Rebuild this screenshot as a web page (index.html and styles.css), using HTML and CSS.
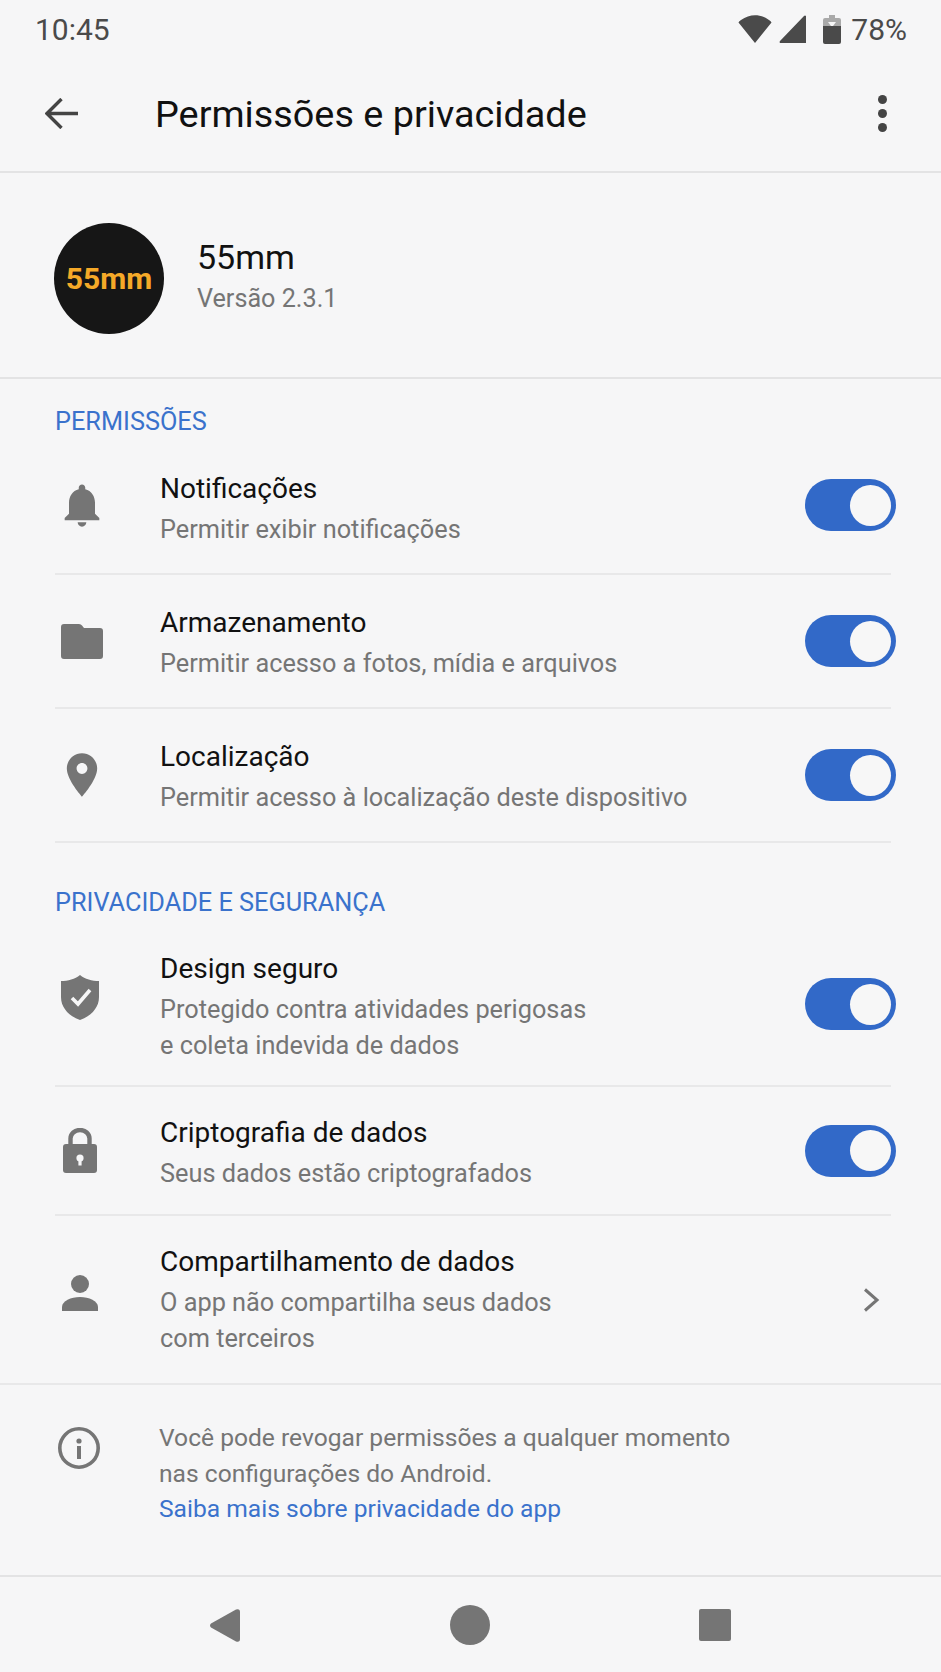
FILE: index.html
```html
<!DOCTYPE html>
<html lang="pt-BR">
<head>
  <meta charset="UTF-8">
  <meta name="viewport" content="width=device-width, initial-scale=1.0">
  <title>Permissões e privacidade</title>
  <link rel="stylesheet" href="styles.css">
</head>
<body>
  <!-- Status bar -->
  <div class="statusbar">
    <span class="status-time">10:45</span>
    <div class="status-right">
      <svg class="ic-wifi" width="34" height="28" viewBox="0 0 34 28"><path d="M17 28 L0.5 7.5 Q1 6 3 5 C12 -1.5 22 -1.5 31 5 Q33 6 33.5 7.5 Z"/></svg>
      <svg class="ic-cell" width="27" height="28" viewBox="0 0 27 28"><path d="M27 1 V28 H1 Q0 27 1 26 L25 1 Q26 0 27 1 Z"/></svg>
      <svg class="ic-batt" width="18" height="29" viewBox="0 0 18 29"><path class="batt-low" d="M6 0 H12 V3 H16 Q18 3 18 5 V11 H0 V5 Q0 3 2 3 H6 Z"/><path d="M0 11 H18 V27 Q18 29 16 29 H2 Q0 29 0 27 Z"/><path class="batt-bolt" d="M5 7 H13 L10 11 H8 Z"/></svg>
      <span class="status-pct">78%</span>
    </div>
  </div>

  <!-- Toolbar -->
  <div class="toolbar">
    <svg class="back" width="33" height="31" viewBox="0 0 33 31"><path d="M33 15.5 H3 M16.5 1 L2 15.5 L16.5 30" fill="none" stroke="#444" stroke-width="3.4"/></svg>
    <h1>Permissões e privacidade</h1>
    <div class="more"><i></i><i></i><i></i></div>
  </div>

  <!-- App -->
  <div class="app-head">
    <div class="app-logo">55mm</div>
    <div class="app-text">
      <div class="app-name">55mm</div>
      <div class="app-version">Versão 2.3.1</div>
    </div>
  </div>

  <!-- Permissions -->
  <div class="section-label">PERMISSÕES</div>
  <div class="list">
    <div class="row row-first">
      <div class="row-icon">
        <svg width="52" height="52" viewBox="0 0 24 24"><path d="M12 22c1.1 0 2-.9 2-2h-4c0 1.1.9 2 2 2zm6-6v-5c0-3.07-1.63-5.64-4.5-6.32V4c0-.83-.67-1.5-1.5-1.5s-1.5.67-1.5 1.5v.68C7.64 5.36 6 7.92 6 11v5l-2 2v1h16v-1l-2-2z"/></svg>
      </div>
      <div class="row-text">
        <div class="row-title">Notificações</div>
        <div class="row-sub">Permitir exibir notificações</div>
      </div>
      <div class="toggle"><span></span></div>
    </div>
    <div class="row">
      <div class="row-icon">
        <svg width="42" height="35" viewBox="0 0 42 35"><path d="M3 0 H18 Q20 0 21 1.5 L23 4 H39 Q42 4 42 7 V32 Q42 35 39 35 H3 Q0 35 0 32 V3 Q0 0 3 0 Z"/></svg>
      </div>
      <div class="row-text">
        <div class="row-title">Armazenamento</div>
        <div class="row-sub">Permitir acesso a fotos, mídia e arquivos</div>
      </div>
      <div class="toggle"><span></span></div>
    </div>
    <div class="row">
      <div class="row-icon">
        <svg width="52" height="52" viewBox="0 0 24 24"><path d="M12 2C8.13 2 5 5.13 5 9c0 5.25 7 13 7 13s7-7.75 7-13c0-3.87-3.13-7-7-7zm0 9.5c-1.38 0-2.5-1.12-2.5-2.5s1.12-2.5 2.5-2.5 2.5 1.12 2.5 2.5-1.12 2.5-2.5 2.5z"/></svg>
      </div>
      <div class="row-text">
        <div class="row-title">Localização</div>
        <div class="row-sub">Permitir acesso à localização deste dispositivo</div>
      </div>
      <div class="toggle"><span></span></div>
    </div>
  </div>

  <!-- Privacy -->
  <div class="section-label section-label-2">PRIVACIDADE E SEGURANÇA</div>
  <div class="list list-2">
    <div class="row row-design">
      <div class="row-icon icon-up">
        <svg width="38" height="45" viewBox="0 0 38 45"><path d="M19 0 C24 4 31 6 38 6 V22 C38 33 30 41 19 45 C8 41 0 33 0 22 V6 C7 6 14 4 19 0 Z"/><path d="M11 23 L17 29 L29 15" fill="none" stroke="#f6f6f7" stroke-width="3.6"/></svg>
      </div>
      <div class="row-text">
        <div class="row-title">Design seguro</div>
        <div class="row-sub">Protegido contra atividades perigosas<br>e coleta indevida de dados</div>
      </div>
      <div class="toggle"><span></span></div>
    </div>
    <div class="row row-crypto">
      <div class="row-icon">
        <svg width="34" height="45" viewBox="0 0 34 45"><path d="M7.5 18 V10.5 a9.5 8.5 0 0 1 19 0 V18" fill="none" stroke="#757575" stroke-width="4.4"/><rect y="16" width="34" height="29" rx="3"/><circle cx="17" cy="30" r="3.6" fill="#f6f6f7"/><rect x="15.4" y="31" width="3.2" height="6.5" fill="#f6f6f7"/></svg>
      </div>
      <div class="row-text">
        <div class="row-title">Criptografia de dados</div>
        <div class="row-sub">Seus dados estão criptografados</div>
      </div>
      <div class="toggle"><span></span></div>
    </div>
    <div class="row row-share">
      <div class="row-icon icon-up">
        <svg width="36" height="36" viewBox="0 0 36 36"><circle cx="18" cy="9" r="9"/><path d="M0 36 V32 C0 26 9 22 18 22 C27 22 36 26 36 32 V36 Z"/></svg>
      </div>
      <div class="row-text">
        <div class="row-title">Compartilhamento de dados</div>
        <div class="row-sub">O app não compartilha seus dados<br>com terceiros</div>
      </div>
      <svg class="chevron" width="17" height="24" viewBox="0 0 17 24"><path d="M2 1.5 L14 12 L2 22.5" fill="none" stroke="#757575" stroke-width="3"/></svg>
    </div>
  </div>

  <!-- Info -->
  <div class="info">
    <svg class="info-icon" width="42" height="42" viewBox="0 0 42 42"><circle cx="21" cy="21" r="19.2" fill="none" stroke="#757575" stroke-width="3.6"/><circle cx="21" cy="14" r="2.6"/><rect x="19" y="19" width="4" height="13"/></svg>
    <p>Você pode revogar permissões a qualquer momento<br>nas configurações do Android.<br><a href="#">Saiba mais sobre privacidade do app</a></p>
  </div>

  <!-- Nav bar -->
  <div class="navbar">
    <svg width="30" height="33" viewBox="0 0 30 33"><path d="M1 14.5 L26 0.6 Q30 -0.5 30 3 V30 Q30 33.5 26 32.4 L1 18.5 Q-1 16.5 1 14.5 Z"/></svg>
    <div class="nav-circle"></div>
    <div class="nav-square"></div>
  </div>
</body>
</html>
```

FILE: styles.css
```css
* {
  box-sizing: border-box;
}
body {
  margin: 0;
  height: 1672px;
  overflow: hidden;
  font-family: Roboto, "Liberation Sans", sans-serif;
  background-color: #f6f6f7;
  color: #111;
}
svg {
  display: block;
  fill: #757575;
}

/* Status bar */
.statusbar {
  display: flex;
  justify-content: space-between;
  align-items: center;
  height: 60px;
  padding: 0 34px 2px 35px;
  color: #4a4a4a;
  font-size: 30px;
}
.status-right {
  display: flex;
  align-items: center;
}
.ic-wifi, .ic-cell, .ic-batt {
  fill: #4a4a4a;
}
.ic-cell {
  margin-left: 7px;
}
.ic-batt {
  margin-left: 17px;
}
.batt-low {
  fill: #a9a9a9;
}
.batt-bolt {
  fill: #f6f6f7;
}
.status-pct {
  margin-left: 10px;
  font-size: 30px;
}

/* Toolbar */
.toolbar {
  display: flex;
  align-items: center;
  height: 113px;
  padding: 0 54px 4px 45px;
  border-bottom: 2px solid #e3e3e4;
}
.toolbar h1 {
  flex: 1;
  margin: 0 0 0 77px;
  font-size: 37.8px;
  font-weight: 400;
  color: #111;
}
.more {
  display: flex;
  flex-direction: column;
  gap: 5px;
}
.more i {
  display: block;
  width: 9px;
  height: 9px;
  border-radius: 50%;
  background-color: #444;
}

/* App header */
.app-head {
  display: flex;
  align-items: center;
  gap: 33px;
  height: 206px;
  padding-left: 54px;
  border-bottom: 2px solid #e3e3e4;
}
.app-logo {
  display: flex;
  align-items: center;
  justify-content: center;
  width: 110px;
  height: 111px;
  margin-top: 6px;
  border-radius: 50%;
  background-color: #161616;
  color: #f5a928;
  font-size: 30px;
  font-weight: 700;
}
.app-text {
  margin-top: 4px;
}
.app-name {
  font-size: 34px;
  line-height: 40px;
}
.app-version {
  margin-top: 4px;
  font-size: 25.2px;
  line-height: 36px;
  color: #757575;
}

/* Sections */
.section-label {
  margin: 28px 0 0 55px;
  font-size: 25.3px;
  line-height: 30px;
  color: #3a72cc;
}
.section-label-2 {
  margin-top: 45px;
  margin-bottom: 5px;
}
.list {
  margin: 0 50px 0 55px;
}
.row {
  display: flex;
  align-items: center;
  height: 134px;
  border-bottom: 2px solid #e8e8e9;
}
.row-icon {
  display: flex;
  justify-content: center;
  flex: 0 0 53px;
}
.row-text {
  flex: 1;
  margin-top: 5px;
  margin-left: 52px;
}
.list-2 .row-icon {
  flex-basis: 50px;
}
.list-2 .row-text {
  margin-left: 55px;
}
.icon-up {
  margin-bottom: 14px;
}
.row-title {
  font-size: 28px;
  line-height: 36px;
  color: #111;
}
.row-sub {
  margin-top: 5px;
  font-size: 25.3px;
  line-height: 36.5px;
  color: #757575;
}
.row-first {
  height: 138px;
}
.row-first .row-text {
  margin-top: 10px;
}
.row-design {
  height: 164px;
}
.row-design .row-text {
  margin-top: 7px;
}
.row-crypto {
  height: 129px;
}
.row-crypto .row-text {
  margin-top: 6px;
}
.row-share {
  height: 169px;
  margin: 0 -50px 0 -55px;
  padding-left: 55px;
}
.row-share .row-text {
  margin-top: 2px;
}
.chevron {
  margin-right: 61px;
}

/* Toggle */
.toggle {
  display: flex;
  align-items: center;
  justify-content: flex-end;
  width: 91px;
  height: 52px;
  margin-right: -5px;
  padding-right: 5px;
  border-radius: 26px;
  background-color: #3269c8;
}
.toggle span {
  display: block;
  width: 41px;
  height: 41px;
  border-radius: 50%;
  background-color: #f7f7f7;
}

/* Info */
.info {
  display: flex;
  align-items: flex-start;
  height: 192px;
  padding: 35px 0 0 58px;
  border-bottom: 2px solid #e3e3e4;
}
.info-icon {
  margin-top: 7px;
}
.info p {
  margin: 0 0 0 59px;
  font-size: 24.6px;
  line-height: 35.5px;
  color: #757575;
}
.info a {
  color: #3a72cc;
  text-decoration: none;
}

/* Nav bar */
.navbar {
  display: flex;
  justify-content: center;
  align-items: center;
  gap: 209.5px;
  height: 96px;
}
.nav-circle {
  width: 40px;
  height: 40px;
  border-radius: 50%;
  background-color: #757575;
}
.nav-square {
  width: 32px;
  height: 32px;
  border-radius: 2px;
  background-color: #757575;
}
```
